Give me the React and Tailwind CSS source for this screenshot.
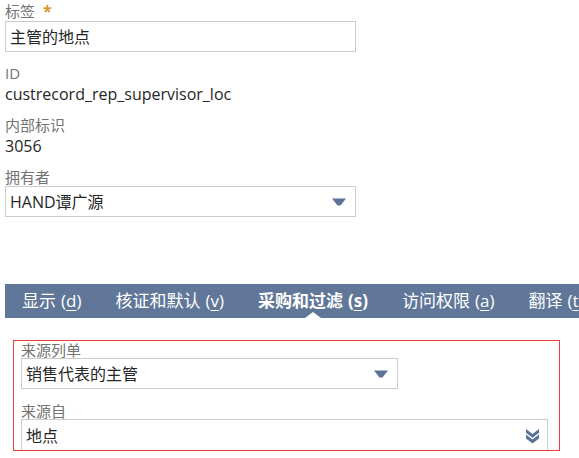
import React from 'react';

const font = { fontFamily: '"Open Sans", "Noto Sans CJK SC", sans-serif' };

const Caret = () => (
  <svg width="14" height="8" viewBox="0 0 14 8" className="shrink-0">
    <path d="M0 0.5 H14 L8.5 7.5 H5.5 Z" fill="#5b7396" />
  </svg>
);

const DoubleChevron = () => (
  <svg width="15" height="16" viewBox="0 0 15 16" className="shrink-0">
    <path d="M1 1 L7.5 6 L14 1 V4.8 L7.5 9.8 L1 4.8 Z" fill="#5b7396" />
    <path d="M1 6.6 L7.5 11.6 L14 6.6 V10.4 L7.5 15.4 L1 10.4 Z" fill="#5b7396" />
  </svg>
);

const Label = ({ children }) => (
  <div className="text-[15px] leading-[18px] text-[#737373]">{children}</div>
);

const Value = ({ children }) => (
  <div className="mt-[2px] text-[16px] leading-[20px] text-[#262626]">{children}</div>
);

const Select = ({ value, width, height = 31, icon, pr = 9 }) => (
  <div
    className="shrink-0 border border-[#cccccc] bg-white flex items-center justify-between pl-[4px] text-[16px] text-[#262626]"
    style={{ width, height, paddingRight: pr }}
  >
    <span>{value}</span>
    {icon}
  </div>
);

const tabs = [
  { label: '显示', key: 'd' },
  { label: '核证和默认', key: 'v' },
  { label: '采购和过滤', key: 's', active: true },
  { label: '访问权限', key: 'a' },
  { label: '翻译', key: 't' },
];

export default function App() {
  return (
    <div className="w-[579px] h-[458px] overflow-hidden bg-white" style={font}>
      <div className="pl-[5px] pt-[2px]">
        <div className="flex items-start text-[15px] leading-[18px] text-[#737373]">
          <span>标签</span>
          <span className="ml-[8px] text-[#e0922a] text-[16px] leading-[18px] font-bold">*</span>
        </div>
        <div className="mt-[1px] w-[351px] h-[31px] border border-[#cccccc] flex items-center pl-[4px] text-[16px] text-[#262626]">
          主管的地点
        </div>

        <div className="mt-[12px]">
          <Label>ID</Label>
          <Value>custrecord_rep_supervisor_loc</Value>
        </div>
        <div className="mt-[12px]">
          <Label>内部标识</Label>
          <Value>3056</Value>
        </div>
        <div className="mt-[12px]">
          <Label>拥有者</Label>
          <Select value="HAND谭广源" width={351} icon={<Caret />} />
        </div>
      </div>

      <div className="mt-[67px] ml-[5px] h-[34px] bg-[#607799] flex items-center gap-[34px] pl-[17px]">
        {tabs.map((t) => (
          <div
            key={t.key}
            className={`relative shrink-0 text-[17px] leading-[22px] text-white whitespace-nowrap ${t.active ? 'font-bold' : ''}`}
          >
            {t.label}
            <span className="ml-[5px]">
              (<span className="underline underline-offset-[3px] decoration-1">{t.key}</span>{t.key === 't' ? '' : ')'}
            </span>
            {t.active && (
              <span className="absolute left-1/2 -translate-x-1/2 bottom-[-6px] w-0 h-0 border-l-[8px] border-r-[8px] border-b-[6px] border-l-transparent border-r-transparent border-b-white" />
            )}
          </div>
        ))}
      </div>

      <div className="mt-[22px] ml-[13px] w-[547px] h-[111px] border border-solid border-[#f23b3b] overflow-hidden pl-[7px]">
        <Label>来源列单</Label>
        <div className="-mt-[1px]">
          <Select value="销售代表的主管" width={377} icon={<Caret />} />
        </div>
        <div className="mt-[13px]">
          <Label>来源自</Label>
        </div>
        <div className="-mt-[1px]">
          <Select value="地点" width={527} height={34} pr={7} icon={<DoubleChevron />} />
        </div>
      </div>
    </div>
  );
}
